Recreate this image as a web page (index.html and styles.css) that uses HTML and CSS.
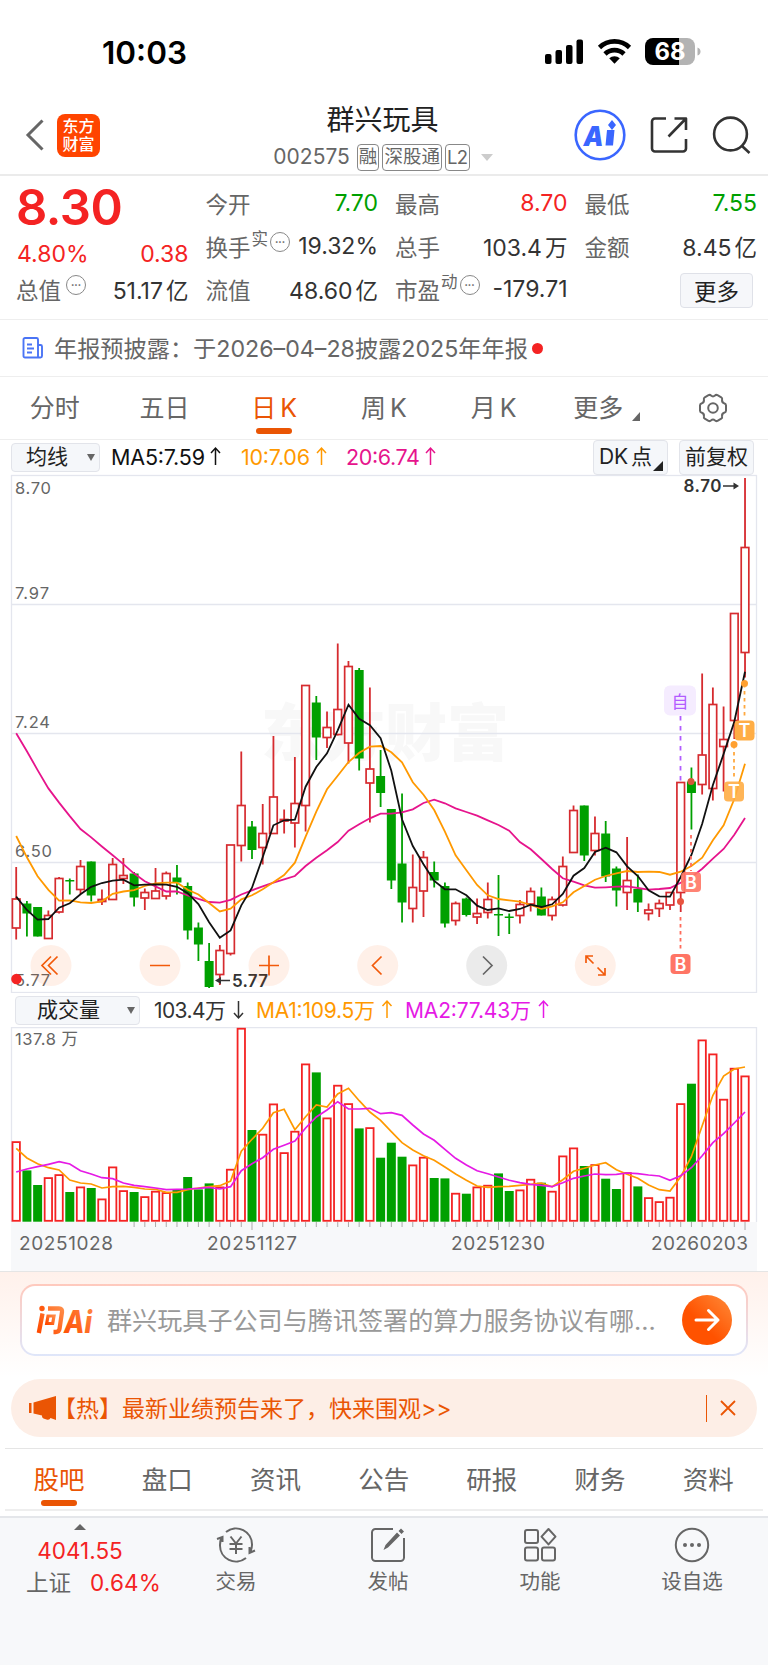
FILE: index.html
```html
<!DOCTYPE html>
<html lang="zh-CN">
<head>
  <meta charset="UTF-8">
  <title>群兴玩具 002575</title>
  <meta name="viewport" content="width=device-width, initial-scale=1">
  <link rel="stylesheet" href="styles.css">
</head>
<body>

  <div class="statusbar">
    <div class="time">10:03</div>
    <svg class="signals" width="160" height="30" viewBox="0 0 160 30">
      <rect x="2" y="16" width="6.5" height="10" rx="2"/>
      <rect x="12.500" y="12" width="6.500" height="14" rx="2"/>
      <rect x="23" y="7" width="6.500" height="19" rx="2"/>
      <rect x="33.500" y="1.500" width="6.500" height="24.500" rx="2"/>
      <g fill="none" stroke="#000" stroke-width="4.600">
        <path d="M56.500 9.500a21.500 21.500 0 0 1 30 0"/>
        <path d="M62 16a13.500 13.500 0 0 1 19 0"/>
      </g>
      <path d="M71.500 25.800l-5.300-5.500a7.800 7.800 0 0 1 10.600 0z"/>
      <path d="M110 0h26v27h-26a8 8 0 0 1-8-8V8a8 8 0 0 1 8-8z"/>
      <path d="M136 0h8a8 8 0 0 1 8 8v11a8 8 0 0 1-8 8h-8z" fill="#b3b3b3"/>
      <path d="M154.500 9.500q3 1 3 4t-3 4z" fill="#b3b3b3"/>
      <text x="111.500" y="22" class="battery-num" textLength="31" lengthAdjust="spacingAndGlyphs">68</text>
    </svg>
  </div>

  <header class="topbar">
    <div class="top-left">
      <svg width="20" height="32" viewBox="0 0 20 32"><path d="M17.500 1.500L3 16l14.500 14.500" fill="none" stroke="#666" stroke-width="3"/></svg>
      <div class="logo">东方<br>财富</div>
    </div>
    <div class="top-title">
      <h1>群兴玩具</h1>
      <div class="code">
        <span class="num">002575</span>
        <span class="tag">融</span><span class="tag">深股通</span><span class="tag tag-l2">L2</span>
        <i class="tri-down"></i>
      </div>
    </div>
    <div class="top-right">
      <svg width="52" height="52" viewBox="0 0 52 52">
        <circle cx="26" cy="26" r="24.300" fill="none" stroke="#3a66ff" stroke-width="2.600"/>
        <text x="9.500" y="36.500" class="ai-text" textLength="20" lengthAdjust="spacingAndGlyphs">A</text>
        <path d="M33 21h7.500l-1.500 15.500h-7.500z M38 11l4 5-4 5-4-5z" fill="#3a66ff"/>
      </svg>
      <svg width="38" height="38" viewBox="0 0 38 38" fill="none" stroke="#333" stroke-width="2.600">
        <path d="M16 2.500H5a3 3 0 0 0-3 3v27a3 3 0 0 0 3 3h28a3 3 0 0 0 3-3V23M24.500 2.500H36V14M35.500 3L18.500 20.500" stroke-linejoin="round"/>
      </svg>
      <svg width="40" height="38" viewBox="0 0 40 38" fill="none" stroke="#333" stroke-width="2.600">
        <circle cx="18.500" cy="18" r="16.400"/><path d="M29.500 29.500l8 7.500"/>
      </svg>
    </div>
  </header>

  <section class="quote">
    <div class="q-col q-price">
      <div class="price red">8.30</div>
      <div class="q-row"><span class="red">4.80%</span><span class="red">0.38</span></div>
      <div class="q-row"><label>总值<i class="dots">•••</i></label><span>51.17<b>亿</b></span></div>
    </div>
    <div class="q-col">
      <div class="q-row"><label>今开</label><span class="green">7.70</span></div>
      <div class="q-row"><label>换手<sup>实</sup><i class="dots">•••</i></label><span>19.32%</span></div>
      <div class="q-row"><label>流值</label><span>48.60<b>亿</b></span></div>
    </div>
    <div class="q-col">
      <div class="q-row"><label>最高</label><span class="red">8.70</span></div>
      <div class="q-row"><label>总手</label><span>103.4<b>万</b></span></div>
      <div class="q-row"><label>市盈<sup>动</sup><i class="dots">•••</i></label><span>-179.71</span></div>
    </div>
    <div class="q-col">
      <div class="q-row"><label>最低</label><span class="green">7.55</span></div>
      <div class="q-row"><label>金额</label><span>8.45<b>亿</b></span></div>
      <div class="q-row q-more"><button>更多</button></div>
    </div>
  </section>

  <div class="notice">
    <svg width="22" height="22" viewBox="0 0 22 22" fill="none" stroke="#4a74f5" stroke-width="1.900">
      <path d="M16 20.500H3a1.500 1.500 0 0 1-1.500-1.500V2.500A1.500 1.500 0 0 1 3 1h11.500A1.500 1.500 0 0 1 16 2.500zM16 8h2.500A1.500 1.500 0 0 1 20 9.500V19a1.500 1.500 0 0 1-1.500 1.500H15M5 7.500h5M5 11.500h7M5 15.500h5"/>
    </svg>
    <span class="notice-text">年报预披露：于2026–04–28披露2025年年报</span>
    <i class="red-dot"></i>
  </div>

  <nav class="period">
    <span>分时</span>
    <span>五日</span>
    <span class="active">日 K</span>
    <span>周 K</span>
    <span>月 K</span>
    <span class="more">更多<i class="corner"></i></span>
    <svg width="32" height="32" viewBox="0 0 32 32" fill="none" stroke="#666" stroke-width="2">
      <path d="M11.500 3.200q1.500-.8 2.500.4q2 1.700 4 0q1-1.200 2.500-.4l3.700 2.100q1.300.9.900 2.300q-.5 2.700 2 3.600q1.800.4 1.900 2v5.600q-.1 1.600-1.900 2q-2.500.9-2 3.600q.4 1.400-.9 2.300l-3.700 2.100q-1.500.8-2.500-.4q-2-1.700-4 0q-1 1.200-2.500.4l-3.700-2.100q-1.300-.9-.9-2.300q.5-2.700-2-3.600q-1.800-.4-1.900-2v-5.600q.1-1.600 1.900-2q2.500-.9 2-3.600q-.4-1.400.9-2.300z"/>
      <circle cx="16" cy="16" r="4.800"/>
    </svg>
  </nav>

  <div class="ma-bar">
    <div class="select"><span>均线</span><i class="caret"></i></div>
    <svg class="ma-text" width="345" height="34" viewBox="105 441 345 34">
      <text x="111" y="466" textLength="94">MA5:7.59</text>
      <text x="241" y="466" textLength="69" class="ma10">10:7.06</text>
      <text x="346" y="466" textLength="74" class="ma20">20:6.74</text>
      <g fill="none" stroke-width="1.500">
        <path d="M215.500 466v-17m-4.500 5l4.500-5 4.500 5" stroke="#111"/>
        <path d="M321.500 466v-17m-4.500 5l4.500-5 4.500 5" stroke="#ff9900"/>
        <path d="M430.500 466v-17m-4.500 5l4.500-5 4.500 5" stroke="#e6148c"/>
      </g>
    </svg>
    <div class="ma-btns">
      <div class="box box-dk">DK 点<i class="corner"></i></div>
      <div class="box">前复权</div>
    </div>
  </div>

  <!-- K 线 -->
  <svg class="kline" width="768" height="519" viewBox="0 474 768 519">
    <text x="261" y="756" class="watermark" textLength="248">东方财富</text>
    <g class="grid">
      <rect x="11.500" y="475.500" width="745" height="517"/>
      <path d="M11 604.500h746M11 733.500h746M11 862.500h746"/>
    </g>
    <g class="axis-label">
      <text x="15" y="494" textLength="36">8.70</text>
      <text x="15" y="598.500" textLength="34">7.97</text>
      <text x="15" y="728" textLength="35">7.24</text>
      <text x="15" y="857" textLength="37">6.50</text>
      <text x="15" y="986" textLength="35">5.77</text>
    </g>
    <g id="candles"></g>
    <g id="maLines" fill="none" stroke-width="1.800"></g>

    <!-- 最高 / 最低 -->
    <g class="mark-label">
      <text x="683.500" y="492" textLength="38">8.70</text>
      <text x="232" y="987" textLength="36">5.77</text>
      <path d="M723 486h12M230 980.500h-11" stroke="#333" stroke-width="1.500"/>
      <path d="M739 486l-5.500-3.500v7zM215 980.500l6-3.500v7z"/>
    </g>
    <circle cx="16.500" cy="979" r="5.300" fill="#f42323"/>

    <!-- 买卖点 -->
    <path d="M680.500 716v68" stroke="#b25cff" stroke-width="1.800" stroke-dasharray="4.500 5.500"/>
    <rect x="664" y="685.500" width="32" height="30" rx="6" fill="#f5ecff"/>
    <text x="680" y="707.500" fill="#b25cff" font-size="17" text-anchor="middle">自</text>
    <g stroke-width="1.800" stroke-dasharray="3.500 3.500">
      <path d="M680.500 917v33M691 835v36" stroke="#ff6b5b"/>
      <path d="M744.500 684v33M734 745v33" stroke="#ffa940"/>
    </g>
    <circle cx="680.500" cy="901.500" r="3.500" fill="#e8543f"/>
    <circle cx="691" cy="781.500" r="3.500" fill="#d8573a"/>
    <circle cx="744.500" cy="683.500" r="3.500" fill="#ffa030"/>
    <circle cx="734" cy="744.500" r="3.500" fill="#ffa030"/>
    <g class="badge-pt">
      <rect x="670.500" y="954" width="20" height="20" rx="4" fill="#ff7565"/><text x="680.500" y="970.500">B</text>
      <rect x="681" y="872" width="20" height="20" rx="4" fill="#ff7565" opacity=".9"/><text x="691" y="888.500">B</text>
      <rect x="734.500" y="720.500" width="20" height="20" rx="4" fill="#ffad45"/><text x="744.500" y="737">T</text>
      <rect x="724" y="781.500" width="20" height="20" rx="4" fill="#ffad45" opacity=".9"/><text x="734" y="798">T</text>
    </g>

    <!-- 图表操作按钮 -->
    <g fill="#ff5a00" fill-opacity=".09">
      <circle cx="51" cy="965.500" r="20.500"/><circle cx="160" cy="965.500" r="20.500"/>
      <circle cx="269" cy="965.500" r="20.500"/><circle cx="377.700" cy="965.500" r="20.500"/>
      <circle cx="595.300" cy="965.500" r="20.500"/>
    </g>
    <circle cx="486.700" cy="965.500" r="20.500" fill="#000" fill-opacity=".08"/>
    <g fill="none" stroke="#f25a0a" stroke-width="1.700">
      <path d="M51 956.500l-9 9 9 9M57.500 956.500l-9 9 9 9M150 965.500h20M259 965.500h20M269 955.500v20M381.500 956.500l-9 9 9 9"/>
      <path d="M586 963v-7h7M586.500 956.500l7 7M605 968v7h-7M604.500 974.500l-7-7"/>
      <path d="M483 956.500l9 9-9 9" stroke="#666"/>
    </g>
  </svg>

  <div class="vol-bar">
    <div class="select"><span>成交量</span><i class="caret"></i></div>
    <svg width="410" height="34" viewBox="150 993 410 34">
      <text x="154" y="1018" textLength="72" fill="#333">103.4万</text>
      <text x="256" y="1018" textLength="119" fill="#ff9900">MA1:109.5万</text>
      <text x="405" y="1018" textLength="126" fill="#e51ae5">MA2:77.43万</text>
      <g fill="none" stroke-width="1.500">
        <path d="M238.500 1001v17m-4.500-5l4.500 5 4.500-5" stroke="#333"/>
        <path d="M387 1018v-17m-4.500 5l4.500-5 4.500 5" stroke="#ff9900"/>
        <path d="M543.500 1018v-17m-4.500 5l4.500-5 4.500 5" stroke="#e51ae5"/>
      </g>
    </svg>
  </div>

  <!-- 成交量 -->
  <svg class="volume" width="768" height="244" viewBox="0 1027 768 244">
    <rect x="11" y="1222" width="746" height="49" fill="#f7f8fa"/>
    <path d="M11.500 1222v-194.500h745V1222" class="vol-frame"/>
    <g id="volBars"></g>
    <g id="volLines" fill="none" stroke-width="1.700"></g>
    <g class="axis-label">
      <text x="15" y="1045" textLength="63">137.8 万</text>
    </g>
    <g class="date-label">
      <text x="19" y="1250" textLength="94">20251028</text>
      <text x="207" y="1250" textLength="90">20251127</text>
      <text x="451" y="1250" textLength="94">20251230</text>
      <text x="651" y="1250" textLength="97">20260203</text>
    </g>
  </svg>

  <section class="ask">
    <div class="ask-box">
      <svg class="ask-logo" width="60" height="44" viewBox="0 -5 60 44">
        <defs>
          <linearGradient id="askGrad" x1="0" y1="1" x2="1" y2="0"><stop offset="0" stop-color="#ff4a00"/><stop offset="1" stop-color="#ff8a45"/></linearGradient>
        </defs>
        <g fill="none" stroke="url(#askGrad)" stroke-width="4.300">
          <path d="M6.500 10.500L2.800 30M12 5.500h11q3.500 0 3 3.500l-2.500 17q-.5 3-4 3h-2"/>
          <path d="M12 13h6l-1.300 7.500h-6z" stroke-width="3.200"/>
        </g>
        <circle cx="6" cy="5.500" r="2.700" fill="#ff5a10"/>
        <text x="28" y="30" class="ask-ai" textLength="28" lengthAdjust="spacingAndGlyphs">Ai</text>
      </svg>
      <span class="ask-text">群兴玩具子公司与腾讯签署的算力服务协议有哪...</span>
      <button class="ask-go">
        <svg width="28" height="28" viewBox="0 0 28 28" fill="none" stroke="#fff" stroke-width="3" stroke-linecap="round" stroke-linejoin="round"><path d="M3 14h22M15.500 4.500L25 14l-9.500 9.500"/></svg>
      </button>
    </div>
    <div class="hot">
      <svg width="30" height="26" viewBox="0 0 30 26" fill="#ea5504"><path d="M1 8h2.500v10H1zM5.500 7.500L28 1v24l-5.500-2q-1 2.500-4 1.500l-3-1q-2-1-1.500-3l-8.500-2z"/></svg>
      <span class="hot-text">【热】最新业绩预告来了，快来围观&gt;&gt;</span>
      <i class="divider"></i>
      <svg width="16" height="16" viewBox="0 0 16 16" fill="none" stroke="#ea5504" stroke-width="1.800"><path d="M1 1l14 14M15 1L1 15"/></svg>
    </div>
  </section>

  <nav class="info-tabs">
    <span class="active">股吧</span>
    <span>盘口</span>
    <span>资讯</span>
    <span>公告</span>
    <span>研报</span>
    <span>财务</span>
    <span>资料</span>
  </nav>

  <footer class="bottom">
    <div class="index">
      <i class="tri-up"></i>
      <div class="index-val">4041.55</div>
      <div class="index-row">上证<span>0.64%</span></div>
    </div>
    <div class="act">
      <svg width="40" height="36" viewBox="0 0 40 36" fill="none" stroke="#666" stroke-width="2">
        <path d="M10 5A16 16 0 0 1 36 18q0 3-1.500 6.500M30 31A16 16 0 0 1 4 18q0-4 1.500-7.500M1 12l5.500-2 0 5M39 23.500l-5.500 2.500 0-6"/>
        <path d="M14.500 9.500l5.500 7 5.500-7M20 16.500V27M13.500 17h13M13.500 22h13"/>
      </svg>
      交易
    </div>
    <div class="act">
      <svg width="36" height="36" viewBox="0 0 36 36" fill="none" stroke="#666" stroke-width="2">
        <path d="M23 2H5.500A3.500 3.500 0 0 0 2 5.500v25A3.500 3.500 0 0 0 5.500 34h25a3.500 3.500 0 0 0 3.500-3.500V11"/>
        <path d="M13.500 23l2-5L27 5.500l3 3L18 20.500zM28.500 4l2.500-2.500 3 3L31.500 7z" fill="#666" stroke="none"/>
      </svg>
      发帖
    </div>
    <div class="act">
      <svg width="36" height="36" viewBox="0 0 36 36" fill="none" stroke="#666" stroke-width="2">
        <rect x="3" y="3" width="13" height="13" rx="2"/><rect x="3" y="20.500" width="13" height="13" rx="2"/><rect x="20" y="20.500" width="13" height="13" rx="2"/>
        <path d="M26.500 2l7 7.700-7 7.700-7-7.700z" stroke-linejoin="round"/>
      </svg>
      功能
    </div>
    <div class="act">
      <svg width="36" height="36" viewBox="0 0 36 36" fill="#666">
        <circle cx="18" cy="18" r="16.200" fill="none" stroke="#666" stroke-width="2"/><circle cx="11" cy="18" r="2"/><circle cx="18" cy="18" r="2"/><circle cx="25" cy="18" r="2"/>
      </svg>
      设自选
    </div>
  </footer>

  <script src="chart.js"></script>
</body>
</html>
```

FILE: styles.css
```css
* { box-sizing: border-box; margin: 0; padding: 0; }

body {
  width: 768px;
  height: 1665px;
  overflow: hidden;
  background: #fff;
  color: #333;
  font-family: Inter, "Noto Sans CJK SC", sans-serif;
}

svg { display: block; flex-shrink: 0; }
i, b { font-style: normal; font-weight: normal; }
.red { color: #f42323; }
.green { color: #00a000; }

/* 状态栏 */
.statusbar {
  height: 100px;
  display: flex;
  justify-content: space-between;
  padding: 33px 65px 0 102px;
}
.time {
  font-size: 31.5px;
  line-height: 40px;
  font-weight: 600;
  color: #000;
}
.signals { margin-top: 5px; }
.battery-num { font-size: 24px; font-weight: 700; fill: #fff; }

/* 顶部标题 */
.topbar {
  height: 76px;
  display: grid;
  grid-template-columns: 220px 1fr 220px;
  border-bottom: 2px solid #ebebeb;
}
.top-left {
  display: flex;
  align-items: center;
  gap: 12px;
  padding: 0 0 4px 25px;
}
.logo {
  width: 43px;
  height: 43px;
  border-radius: 8px;
  background: #ff4400;
  color: #fff;
  font-size: 16px;
  line-height: 18px;
  font-weight: 500;
  text-align: center;
  padding-top: 3px;
}
.top-title { text-align: center; padding-top: 3px; }
.top-title h1 {
  font-size: 28px;
  line-height: 34px;
  font-weight: 400;
  color: #222;
  margin-left: -3px;
}
.code {
  display: flex;
  justify-content: center;
  align-items: center;
  gap: 3px;
  margin: 6px 0 0 -2px;
  color: #666;
}
.code .num { font-size: 21px; line-height: 28px; margin-right: 4px; }
.tag {
  border: 1.5px solid #888;
  border-radius: 4px;
  height: 27px;
  padding: 0 1px;
  font-size: 18.500px;
  line-height: 22px;
}
.tag-l2 { line-height: 24px; letter-spacing: -0.5px; }
.tri-down {
  border: 6px solid transparent;
  border-top: 7px solid #ccc;
  border-bottom: 0;
  margin-left: 8px;
}
.top-right {
  display: flex;
  align-items: center;
  justify-content: flex-end;
  gap: 24px;
  padding: 0 16px 4px 0;
}
.ai-text { font-size: 27px; font-weight: 900; font-style: italic; fill: #3a66ff; }

/* 行情 */
.quote {
  height: 144px;
  display: grid;
  grid-template-columns: repeat(4, 171.500px);
  column-gap: 18px;
  padding: 5px 0 0 17px;
  border-bottom: 1px solid #eee;
}
.q-row {
  height: 43px;
  display: flex;
  justify-content: space-between;
  align-items: center;
  font-size: 23px;
  white-space: nowrap;
}
.q-row b { margin-left: 3px; font-size: 22.500px; }
.q-row label { color: #666; font-size: 22.500px; display: flex; align-items: center; margin-left: -1px; }
.q-row sup { font-size: 16.500px; line-height: 18px; margin: -14px 1px 0 1px; }
.dots {
  width: 20px;
  height: 20px;
  border: 1.5px solid #888;
  border-radius: 50%;
  font-size: 6px;
  line-height: 17px;
  text-align: center;
  margin: -8px 0 0 1px;
}
.q-price label .dots { margin-left: 5px; }
.q-price .price {
  height: 50px;
  margin-left: -1px;
  font-size: 49px;
  line-height: 53px;
  font-weight: 600;
  letter-spacing: -0.5px;
}
.q-price .q-row:nth-child(2) { height: 36px; padding-top: 9px; }
.q-row.q-more { justify-content: flex-end; }
.q-more button {
  width: 73px;
  height: 35px;
  margin: 3px 4px 0 0;
  border: 1.5px solid #dfe1e8;
  border-radius: 4px;
  background: #f6f7fa;
  font: 22.500px/28px "Noto Sans CJK SC", sans-serif;
  color: #222;
}

.notice {
  height: 57px;
  display: flex;
  align-items: center;
  padding-left: 22px;
  border-bottom: 1px solid #eee;
  color: #666;
}
.notice-text { margin: -3px 4px 0 10px; font-size: 23.200px; white-space: nowrap; }
.red-dot { width: 11px; height: 11px; border-radius: 50%; background: #f42323; }

/* 周期切换 */
.period {
  height: 63px;
  display: grid;
  grid-template-columns: repeat(7, 109.700px);
  justify-items: center;
  align-items: center;
  border-bottom: 1px solid #eee;
  font-size: 25px;
  color: #666;
}
.period span { position: relative; white-space: nowrap; word-spacing: -3px; margin-top: -4px; }
.period .more { margin-right: 10px; }
.active { color: #ea5504; }
.active::after {
  content: "";
  position: absolute;
  left: 50%;
  bottom: -10px;
  width: 36px;
  height: 6px;
  margin-left: -18px;
  border-radius: 3px;
  background: #ea5504;
}
.corner {
  position: absolute;
  right: -17px;
  bottom: 3px;
  border-left: 8px solid transparent;
  border-bottom: 9px solid #666;
}

.ma-bar {
  height: 34px;
  display: flex;
  align-items: center;
  padding-left: 11px;
}
.ma-bar text { font-size: 21.5px; fill: #111; }
.ma-bar .ma10 { fill: #ff9900; }
.ma-bar .ma20 { fill: #e6148c; }
.select, .box {
  position: relative;
  background: #f5f7fa;
  border: 1.5px solid #e2e4ea;
  border-radius: 4px;
  color: #222;
  font-size: 21px;
  white-space: nowrap;
}
.select {
  width: 89px;
  height: 29px;
  padding-left: 14px;
  display: flex;
  align-items: center;
  line-height: 25px;
}
.select span { margin-top: -2px; }
.caret {
  margin-left: auto;
  margin-right: 4px;
  border: 4.5px solid transparent;
  border-top: 7px solid #666;
  border-bottom: 0;
}
.ma-text { margin-left: 5px; }
.ma-btns { margin: 0 14px 0 auto; display: flex; gap: 11px; }
.box { width: 75px; height: 35px; line-height: 32px; text-align: center; }
.box-dk { padding-right: 10px; word-spacing: -3px; }
.box .corner { right: 4px; bottom: 3px; border-left-width: 10px; border-bottom: 10px solid #222; }

/* 图表 */
.grid rect, .grid path, .vol-frame { fill: none; stroke: #e4e6ee; stroke-width: 1.300; }
.axis-label { font-size: 16.500px; fill: #666; }
.mark-label { font-size: 17px; font-weight: 600; fill: #333; }
.date-label { font-size: 19px; fill: #666; }
.watermark { font-size: 62px; font-weight: 900; fill: #f8f8f8; }
.badge-pt { font-size: 18px; font-weight: 600; fill: #fff; text-anchor: middle; }

.vol-bar {
  height: 34px;
  display: flex;
  align-items: center;
  padding-left: 15px;
}
.vol-bar text { font-size: 21px; }
.vol-bar .select { width: 125px; padding-left: 21px; margin-right: 10px; }

/* 问AI */
.ask {
  height: 177px;
  padding: 12px 11px 0;
  border-top: 1px solid #e5e5e5;
  background: linear-gradient(#fff1eb, #fff 105px);
}
.ask-box {
  height: 72px;
  margin: 0 9px;
  border: 2px solid transparent;
  border-radius: 15px;
  background: linear-gradient(#fff, #fff) padding-box, linear-gradient(#ffc9bd, #dfe6fa) border-box;
  display: flex;
  align-items: center;
  padding: 0 14px;
}
.ask-logo { overflow: visible; }
.ask-ai { font-size: 31px; font-weight: 800; font-style: italic; fill: url(#askGrad); }
.ask-text { margin: -3px 0 0 11px; font-size: 25.100px; color: #999; white-space: nowrap; }
.ask-go {
  width: 50px;
  height: 50px;
  margin-left: auto;
  border: 0;
  border-radius: 50%;
  background: linear-gradient(45deg, #ff5200 40%, #ff8c3a);
  display: flex;
  align-items: center;
  justify-content: center;
}
.hot {
  height: 58px;
  margin-top: 23px;
  border-radius: 29px;
  background: #fdeee6;
  color: #ea5504;
  display: flex;
  align-items: center;
  padding: 0 21px 0 17px;
  font-size: 23px;
}
.hot-text { margin: -3px 0 0 -5px; white-space: nowrap; }
.divider { width: 1.500px; height: 27px; margin: 0 13px 0 auto; background: #ea5504; }

.info-tabs {
  height: 63px;
  margin: 0 5px;
  display: grid;
  grid-template-columns: repeat(7, 108.200px);
  justify-items: center;
  align-items: center;
  border-top: 1px solid #e5e5e5;
  border-bottom: 2px solid #eee;
  font-size: 25.500px;
  color: #666;
}
.info-tabs span { position: relative; margin-top: -3px; }
.info-tabs .active::after { bottom: -10px; }

/* 底部工具栏 */
.bottom {
  height: 149px;
  margin-top: 5px;
  border-top: 2px solid #e4e6ea;
  background: #f7f8fa;
  display: grid;
  grid-template-columns: 160px repeat(4, 152px);
  color: #666;
}
.index { text-align: center; padding: 6px 0 0; }
.tri-up {
  display: block;
  width: 0;
  margin: 0 auto;
  border: 6px solid transparent;
  border-top: 0;
  border-bottom: 6px solid #666;
}
.index-val { font-size: 22.500px; line-height: 30px; margin-top: 6px; color: #f42323; }
.index-row { font-size: 22.500px; line-height: 34px; padding-left: 26px; text-align: left; white-space: nowrap; }
.index-row span { margin-left: 19px; color: #f42323; letter-spacing: 0.200px; }
.act {
  display: flex;
  flex-direction: column;
  align-items: center;
  padding-top: 9px;
  gap: 4px;
  font-size: 20.500px;
  line-height: 30px;
}
```

FILE: chart.js
```js
const STEP = 10.718;
const X0 = 16.2;
const RED = '#d62b2f';
const GREEN = '#00a000';

// 颜色, 最高, 实体上沿, 实体下沿, 最低
const candles = [
  ['r',867,899,928,939.5],['g',901,903.5,913.5,936.5],['g',907,907,936.5,936.5],['r',910.5,915.5,938.5,938.5],
  ['r',877,878.5,912,913.5],['g',878.5,880,881,894.5],['r',860,866.5,889.5,894],['g',861.5,861.5,895.5,901.5],
  ['r',889.5,899.5,901.5,905],['r',858,864.5,899.5,899.5],['r',858,875.5,878.5,884],['g',872,873.5,897.5,906.5],
  ['r',888.5,892.5,898,910],['r',868,891,898.5,898.5],['r',871.5,873.5,896,899.5],['g',865,877.5,882.5,894.5],
  ['g',882.5,886,930.5,939.5],['g',922.5,927.5,944.5,961],['g',943,961,987,988],['r',945,950.5,974.5,985],
  ['r',845,845,953.5,955.5],['r',751.5,805.5,845.5,861.5],['g',821,826.5,850,859],['r',804,833.5,847.5,864.5],
  ['r',736,797,833.5,833.5],['r',809.5,819.5,821,833.5],['r',757,803.5,823,847.5],['r',685.5,685.5,805.5,831.5],
  ['g',696,702.5,737.5,760],['r',711.5,727.5,737.5,748],['r',643.5,709.5,734.5,735.5],['r',661,666.5,743,763.5],
  ['g',668,670,758.5,770.5],['r',687.5,769,783,822.5],['g',750,776,793,807],['g',809,809,880.5,889],
  ['g',793.5,863.5,902.5,922.5],['r',854.5,887.5,908.5,922.5],['r',851,857.5,891,917],['g',861.5,872,880.5,887.5],
  ['g',882.5,886,923.5,927.5],['r',901.5,903.5,920.5,925.5],['g',897.5,898.5,915,916.5],['r',898.5,913.5,917,924],
  ['r',882.5,899.5,912.5,918.5],['g',875,914,915,936],['g',913.5,916.5,917.5,934],['r',900,904.5,915.5,923.5],
  ['r',887.5,891.5,904,911.5],['g',887.5,896.5,915.5,915.5],['r',896.5,899.5,915.5,920.5],['r',856.5,866.5,905,906.5],
  ['r',805.5,810.5,852.5,852.5],['g',805.5,805.5,855.5,861],['r',816.5,833.5,850.5,855.5],['g',821,833.5,876.5,882],
  ['g',866.5,868.5,890.5,906.5],['r',837,880.5,892.5,910],['g',874.5,889,902.5,912],['r',903.5,910,913.5,920.5],
  ['r',899.5,903.5,908.5,917],['r',892.5,892.5,905,910],['r',782.5,782.5,892.5,912],['g',767.5,781.5,793,829.5],
  ['r',673.5,755,784.5,794.5],['r',687.5,704.5,788.5,800.5],['r',706.5,739.5,746.5,791.5],['r',613.5,613.5,720.5,739],
  ['r',478,547.5,652.5,677.5]
];

const ma5 = [896.6,910,919.6,919,907.7,903.3,894.2,886.8,883,880.7,879.7,885.4,884.7,884.4,884.7,886.8,893.2,904,922.3,937.8,930.4,905.3,887.7,857.3,825.3,820.3,819.7,786.7,767,753.3,730.3,704.7,718.7,725.3,738.3,770.7,819.3,846,864.3,881,889.3,889.3,895.3,905.7,910,908.3,911,909,904.7,907,904.3,894,875.7,868,852,847.7,852.3,866.3,876,890.3,896.3,896.7,877,855,823.7,785,754,721.7,671.7];
const ma10 = [836,857.3,876.3,889.8,900.6,900.3,902.3,903,901.3,893.8,891.5,890.1,886,883.4,882.7,882.7,889.8,894.5,903,911.4,908.7,899.3,895.3,889.3,882.3,875,862.7,836.7,811.7,789.3,775.7,762,752.7,746.7,746,752.3,762.3,782.3,794.7,810,831.7,855.3,870.3,885,895.3,899,900.3,901.7,905,908.7,906.3,902.3,892.3,886,879.7,876,873.3,871,872,871.7,872,874.7,871.7,866,857.7,840.3,825.3,799,763.7];
const ma20 = [733.3,751.2,770.1,788.4,802.6,816.1,829,837.4,846.5,855.3,864.1,873.6,881.3,886.4,891.5,891.5,895.5,898.9,902,902.6,899.9,894.5,890.3,886.3,882.7,879.3,876,866,857.7,850.3,842,830.7,824.3,818.3,813.7,813.7,812.3,809.3,803,799.7,803.3,808.3,812,815.7,820.3,825,830.7,842,849.3,859,869,878.3,881.7,885.3,887.7,887.3,886.7,886.3,888,889.7,889,888,882.7,877.3,868.7,858.7,849,834.7,818];

// 成交量柱高
const vols = [80.3,51.3,36.7,44.3,47.3,29.7,35,33.7,23,55,31.3,29.7,25.3,30.7,29.3,32,44.7,32.3,38.3,35,52.7,193.7,91.7,87.7,118,69.3,90.7,158,149.3,104,136.7,118.3,93.3,94.3,64,79,65,57,64.7,43.7,43.3,28.7,28,35,36.7,48.3,30.7,32,42.7,39,30.7,66,74,55.7,57.3,43,32.7,49.3,35.3,24.3,20.3,24.7,118.3,138,182,168,122.7,153.7,146];
const volMa1 = [475,504,521,533,540,570,579,582,594,590,589,592,597,598,607,607,599,594,590,587,573,484,448,415,368,358,419,380,345,351,312,295,332,366,391,425,458,480,497,511,531,552,571,588,592,590,589,586,583,579,590,569,544,535,525,518,539,553,565,585,599,603,560,500,407,316,258,237,231];
const volMa2 = [546,537,530,523,515,522,542,552,563,566,579,586,590,594,599,598,597,595,592,597,590,542,521,503,478,466,453,414,381,360,335,357,357,355,371,368,376,405,432,451,478,505,525,542,551,561,571,578,583,586,590,578,565,558,552,554,553,549,551,555,558,571,557,533,497,458,431,399,366];

const px = i => X0 + i * STEP;

function line(ys, color) {
  const pts = ys.map((y, i) => px(i).toFixed(1) + ',' + y.toFixed(1)).join(' ');
  return `<polyline points="${pts}" stroke="${color}"/>`;
}

let html = '';
candles.forEach(([c, hi, top, bot, lo], i) => {
  const x = px(i);
  if (c === 'g') {
    html += `<path d="M${x} ${hi}V${lo}" stroke="${GREEN}" stroke-width="1.8"/>`;
    html += `<rect x="${x - 4.5}" y="${top}" width="9" height="${Math.max(bot - top, 1.5)}" fill="${GREEN}"/>`;
  } else {
    html += `<path d="M${x} ${hi}V${top}M${x} ${bot}V${lo}" stroke="${RED}" stroke-width="1.8"/>`;
    html += `<rect x="${x - 3.8}" y="${top}" width="7.6" height="${bot - top}" fill="#fff" stroke="${RED}" stroke-width="1.7"/>`;
  }
});
document.getElementById('candles').innerHTML = html;
document.getElementById('maLines').innerHTML = line(ma20, '#e6148c') + line(ma10, '#ff9900') + line(ma5, '#111');

let bars = '';
vols.forEach((h, i) => {
  const x = px(i);
  if (candles[i][0] === 'g') {
    bars += `<rect x="${x - 4.5}" y="${1221.7 - h}" width="9" height="${h}" fill="${GREEN}"/>`;
  } else {
    bars += `<rect x="${x - 3.7}" y="${1222.4 - h}" width="7.4" height="${h - 1.6}" fill="#fff" stroke="#f42323" stroke-width="1.8"/>`;
  }
  // 底部刻度
  if (i > 10) {
    bars += `<path d="M${x} 1222v${(i + 1) % 23 === 0 ? 8 : 5}" stroke="#aaa"/>`;
  }
});
document.getElementById('volBars').innerHTML = bars;

const volY = v => 990 + v / 3;
document.getElementById('volLines').innerHTML = line(volMa1.map(volY), '#ff9900') + line(volMa2.map(volY), '#e51ae5');
```
